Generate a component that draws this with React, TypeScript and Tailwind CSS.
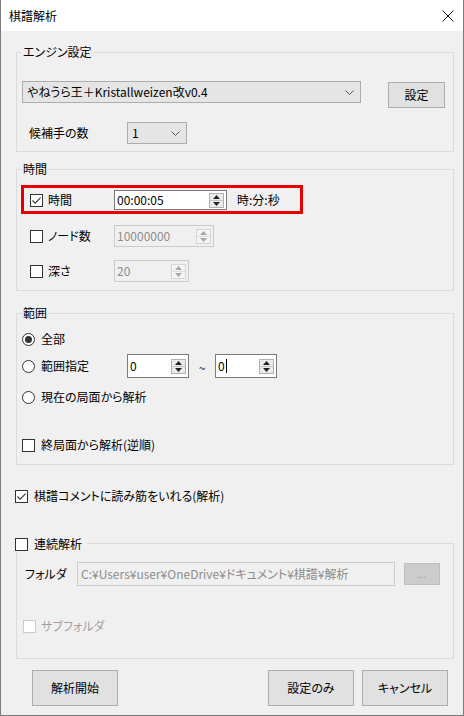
import React from 'react';

const font = "font-['Noto_Sans_CJK_JP',sans-serif] [font-feature-settings:'palt'] text-[12px] leading-[16px] text-black";

const Check = ({ checked = false, disabled = false }: { checked?: boolean; disabled?: boolean }) => (
  <div
    className={`w-[13px] h-[13px] shrink-0 border bg-white flex items-center justify-center ${
      disabled ? 'border-[#cccccc]' : 'border-[#333333]'
    }`}
  >
    {checked && (
      <svg width="11" height="11" viewBox="0 0 11 11">
        <path d="M1.5 5.5 L4.2 8.2 L9.6 2.6" fill="none" stroke="#333" strokeWidth="1.1" />
      </svg>
    )}
  </div>
);

const Radio = ({ selected = false }: { selected?: boolean }) => (
  <div className="w-[13px] h-[13px] shrink-0 rounded-full border border-[#333333] bg-white flex items-center justify-center">
    {selected && <div className="w-[7px] h-[7px] rounded-full bg-[#333333]" />}
  </div>
);

const Tri = ({ up, color }: { up: boolean; color: string }) => (
  <svg width="7" height="4" viewBox="0 0 7 4">
    <path d={up ? 'M0 4 L3.5 0 L7 4 Z' : 'M0 0 L3.5 4 L7 0 Z'} fill={color} />
  </svg>
);

const Spin = ({ disabled = false }: { disabled?: boolean }) => {
  const c = disabled ? '#a8a8a8' : '#222';
  return (
    <div
      className={`w-[15px] h-[15px] shrink-0 flex flex-col border ${
        disabled ? 'border-[#d6d6d6] bg-[#f4f4f4]' : 'border-[#b0b0b0] bg-[#ececec]'
      }`}
    >
      <div className="flex-1 flex items-center justify-center">
        <Tri up color={c} />
      </div>
      <div className={`h-px ${disabled ? 'bg-[#dcdcdc]' : 'bg-[#c4c4c4]'}`} />
      <div className="flex-1 flex items-center justify-center">
        <Tri up={false} color={c} />
      </div>
    </div>
  );
};

const SpinInput = ({
  value,
  w,
  h,
  disabled = false,
  caret = false,
}: {
  value: string;
  w: string;
  h: string;
  disabled?: boolean;
  caret?: boolean;
}) => (
  <div
    className={`${w} ${h} shrink-0 flex items-center pl-[2px] pr-[2px] border ${
      disabled ? 'border-[#cccccc] bg-[#f0f0f0] text-[#8d8d8d]' : 'border-[#7a7a7a] bg-white'
    }`}
  >
    <span className="flex-1 flex items-center">
      {value}
      {caret && <span className="inline-block w-px h-[14px] bg-black ml-px" />}
    </span>
    <Spin disabled={disabled} />
  </div>
);

const Chevron = () => (
  <svg width="9" height="5" viewBox="0 0 9 5">
    <path d="M0.5 0.5 L4.5 4.5 L8.5 0.5" fill="none" stroke="#555" strokeWidth="1" />
  </svg>
);

const Combo = ({ value, w }: { value: string; w: string }) => (
  <div className={`${w} h-[22px] shrink-0 flex items-center justify-between pl-[4px] pr-[6px] border border-[#adadad] bg-[#e5e5e5]`}>
    <span>{value}</span>
    <Chevron />
  </div>
);

const Button = ({ label, className = '' }: { label: string; className?: string }) => (
  <div className={`shrink-0 flex items-center justify-center border border-[#adadad] bg-[#e1e1e1] ${className}`}>
    {label}
  </div>
);

const Group = ({
  legend,
  className = '',
  children,
}: {
  legend: React.ReactNode;
  className?: string;
  children: React.ReactNode;
}) => (
  <div className={`relative w-[438px] shrink-0 border border-[#dcdcdc] ${className}`}>
    <div className="absolute -top-[9px] left-[5px] px-[1px] bg-[#f0f0f0] leading-[16px]">{legend}</div>
    {children}
  </div>
);

export default function App() {
  return (
    <div className={`w-[464px] h-[716px] flex flex-col border-x border-b border-[#7a7a7a] bg-[#f0f0f0] ${font}`}>
      {/* title bar */}
      <div className="h-[31px] shrink-0 bg-white flex items-center justify-between pl-[8px] pr-[9px]">
        <span>棋譜解析</span>
        <svg width="12" height="12" viewBox="0 0 12 12">
          <path d="M0.5 0.5 L11.5 11.5 M11.5 0.5 L0.5 11.5" stroke="#111" strokeWidth="1" />
        </svg>
      </div>

      <div className="flex flex-col pl-[15px]">
        {/* engine */}
        <Group legend="エンジン設定" className="mt-[21px] h-[100px]">
          <div className="flex items-start mt-[28px] ml-[5px]">
            <Combo value="やねうら王＋Kristallweizen改v0.4" w="w-[339px]" />
            <Button label="設定" className="ml-[27px] mt-[1px] w-[57px] h-[26px]" />
          </div>
          <div className="flex items-center mt-[14px] pl-[12px]">
            <span className="w-[98px]">候補手の数</span>
            <Combo value="1" w="w-[60px]" />
          </div>
        </Group>

        {/* time */}
        <Group legend="時間" className="mt-[17px] h-[122px]">
          <div className="ml-[4px] mt-[15px] w-[282px] h-[29px] border-[3px] border-[#e60000] flex items-center pt-[1px] pl-[6px]">
            <Check checked />
            <span className="ml-[5px] w-[66px]">時間</span>
            <SpinInput value="00:00:05" w="w-[113px]" h="h-[20px]" />
            <span className="ml-[10px]">時:分:秒</span>
          </div>
          <div className="flex items-center h-[22px] mt-[11px] pl-[13px]">
            <Check />
            <span className="ml-[5px] w-[66px]">ノード数</span>
            <SpinInput value="10000000" w="w-[100px]" h="h-[22px]" disabled />
          </div>
          <div className="flex items-center h-[22px] mt-[13px] pl-[13px]">
            <Check />
            <span className="ml-[5px] w-[66px]">深さ</span>
            <SpinInput value="20" w="w-[75px]" h="h-[22px]" disabled />
          </div>
        </Group>

        {/* range */}
        <Group legend="範囲" className="mt-[22px] h-[152px]">
          <div className="flex items-center h-[16px] mt-[17px] pl-[5px]">
            <Radio selected />
            <span className="ml-[6px]">全部</span>
          </div>
          <div className="flex items-center h-[24px] mt-[7px] pl-[5px]">
            <Radio />
            <span className="ml-[6px] w-[86px]">範囲指定</span>
            <SpinInput value="0" w="w-[62px]" h="h-[24px]" />
            <span className="w-[26px] text-center pt-[4px]">~</span>
            <SpinInput value="0" w="w-[62px]" h="h-[24px]" caret />
          </div>
          <div className="flex items-center h-[16px] mt-[11px] pl-[5px]">
            <Radio />
            <span className="ml-[6px]">現在の局面から解析</span>
          </div>
          <div className="flex items-center h-[16px] mt-[32px] pl-[5px]">
            <Check />
            <span className="ml-[6px]">終局面から解析(逆順)</span>
          </div>
        </Group>

        {/* comment */}
        <div className="flex items-center h-[16px] mt-[23px] -ml-[1px]">
          <Check checked />
          <span className="ml-[6px]">棋譜コメントに読み筋をいれる(解析)</span>
        </div>

        {/* batch */}
        <div className="relative w-[438px] h-[116px] shrink-0 mt-[39px] border border-[#dcdcdc]">
          <div className="absolute -top-[8px] -left-[2px] flex items-center pr-[5px] bg-[#f0f0f0] h-[16px]">
            <Check />
            <span className="ml-[6px]">連続解析</span>
          </div>
          <div className="flex items-start mt-[18px] pl-[8px]">
            <span className="w-[52px] h-[24px] flex items-center">フォルダ</span>
            <div className="w-[318px] h-[24px] flex items-center pl-[3px] border border-[#cccccc] bg-[#f0f0f0] text-[#8d8d8d]">
              C:¥Users¥user¥OneDrive¥ドキュメント¥棋譜¥解析
            </div>
            <div className="ml-[9px] mt-[1px] w-[36px] h-[22px] flex items-center justify-center border border-[#bfbfbf] bg-[#cccccc] text-[#9a9a9a] text-[10px]">
              ...
            </div>
          </div>
          <div className="flex items-center h-[16px] mt-[32px] pl-[6px]">
            <Check disabled />
            <span className="ml-[5px] text-[#a0a0a0]">サブフォルダ</span>
          </div>
        </div>

        {/* buttons */}
        <div className="flex mt-[11px]">
          <Button label="解析開始" className="ml-[16px] w-[86px] h-[36px]" />
          <Button label="設定のみ" className="ml-[150px] w-[86px] h-[36px]" />
          <Button label="キャンセル" className="ml-[8px] w-[86px] h-[36px]" />
        </div>
      </div>
    </div>
  );
}
